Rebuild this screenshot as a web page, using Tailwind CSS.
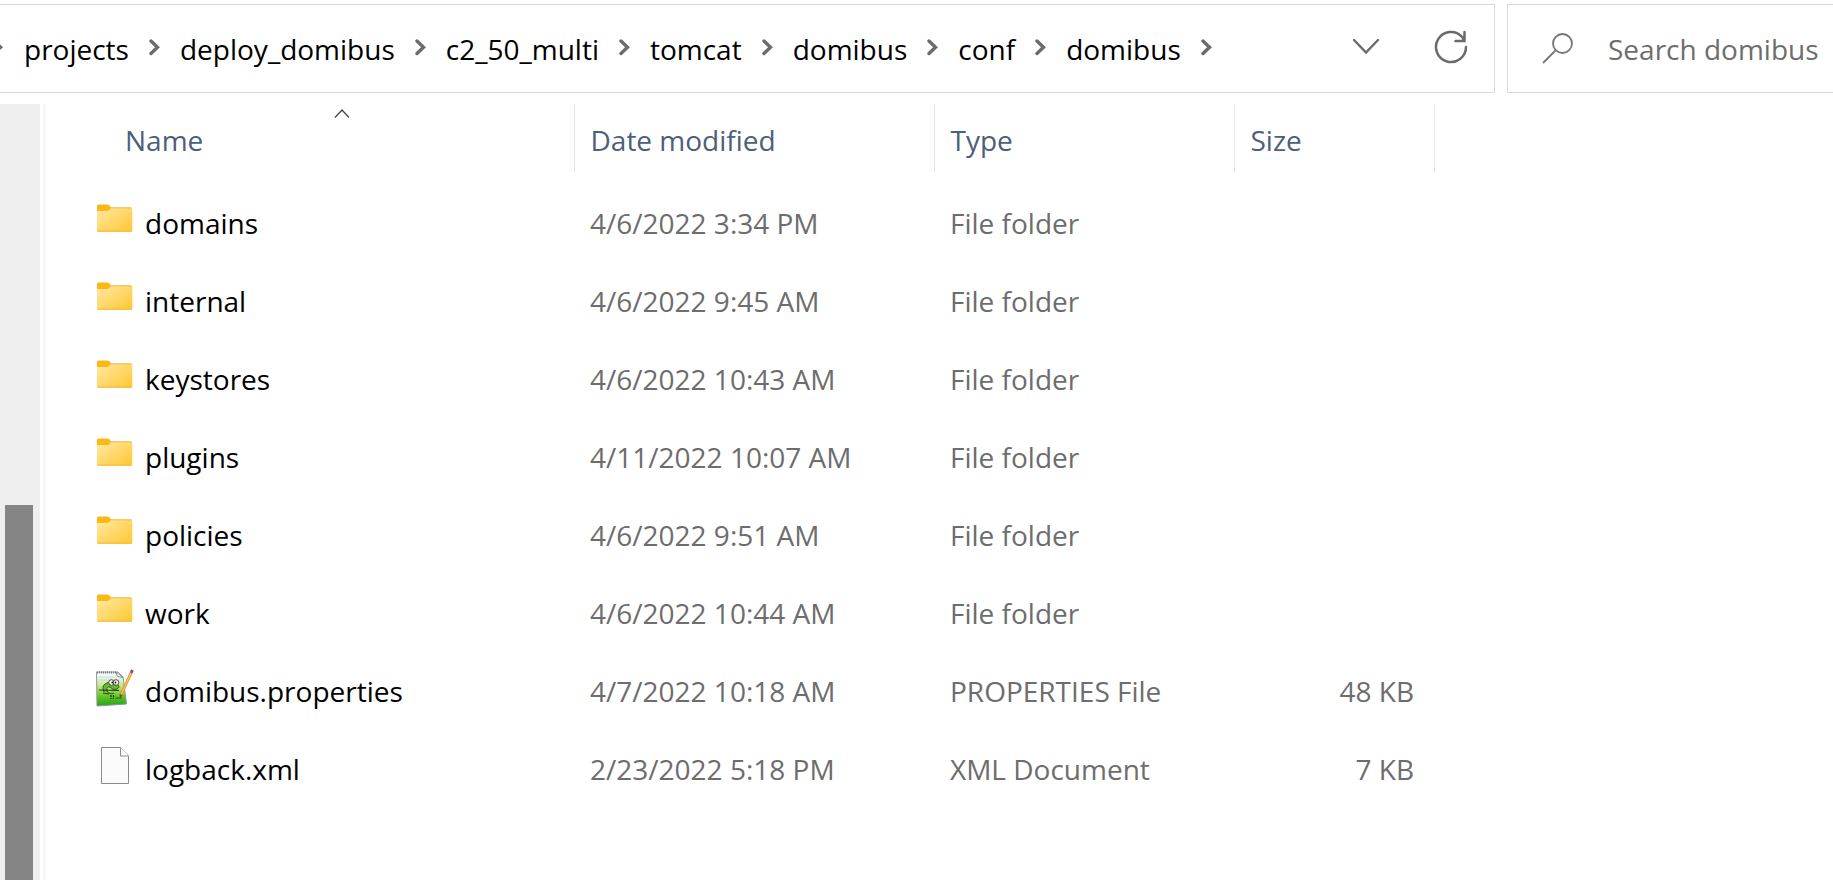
<!DOCTYPE html>
<html lang="en">
<head>
<meta charset="utf-8">
<title>domibus</title>
<script src="https://cdn.jsdelivr.net/npm/@tailwindcss/browser@4"></script>
</head>
<body class="bg-white font-['Open_Sans',sans-serif] text-[28px] leading-9 text-black">
<svg class="absolute size-0" aria-hidden="true">
  <defs>
    <linearGradient id="folderFace" x1="0" y1="0" x2="1" y2="1">
      <stop offset="0" stop-color="#ffe9a3"/><stop offset="1" stop-color="#ffc731"/>
    </linearGradient>
    <linearGradient id="noteFace" x1="0" y1="0" x2="0" y2="1">
      <stop offset="0.1" stop-color="#f4f8fb"/><stop offset="0.4" stop-color="#c5e88a"/><stop offset="0.7" stop-color="#6cc524"/><stop offset="1" stop-color="#1fa51c"/>
    </linearGradient>
  </defs>
  <symbol id="chevron" viewBox="0 0 12 18"><path d="M2 3 8.500 9.200 2 15.500" fill="none" stroke="#6b6b6b" stroke-width="3.400" stroke-linecap="round"/></symbol>
  <symbol id="folder" viewBox="0 0 40 40">
    <path d="M2 13V7Q2 5.500 3.500 5.500H12Q13.500 5.500 14.500 6.500L16.500 9 14 12Z" fill="#fcb814"/>
    <path d="M2 12H12Q13.500 12 14.500 11L16 9H36Q37.300 9 37.300 10.200V31.500Q37.300 32.500 36.300 32.500H3Q2 32.500 2 31.500Z" fill="url(#folderFace)"/>
    <path d="M16 8.800H36.500M2.500 32.200H36.800" stroke="#edb52f" stroke-width="1" fill="none"/>
  </symbol>
</svg>
<div class="flex min-h-screen flex-col pt-1">
  <header class="flex h-[89px] gap-3">
    <nav aria-label="Address" class="flex min-w-0 flex-1 items-center border border-l-0 border-[#d9d9d9] pr-6">
      <ol class="flex flex-1 items-center whitespace-nowrap">
        <li class="-ml-2 flex items-center"><svg class="mr-5 mb-1 h-[18px] w-3"><use href="#chevron"/></svg><a href="#">projects</a></li>
        <li class="flex items-center"><svg class="mr-[19px] ml-5 mb-1 h-[18px] w-3"><use href="#chevron"/></svg><a href="#">deploy_domibus</a></li>
        <li class="flex items-center"><svg class="mr-[19px] ml-5 mb-1 h-[18px] w-3"><use href="#chevron"/></svg><a href="#">c2_50_multi</a></li>
        <li class="flex items-center"><svg class="mr-[19px] ml-5 mb-1 h-[18px] w-3"><use href="#chevron"/></svg><a href="#">tomcat</a></li>
        <li class="flex items-center"><svg class="mr-[19px] ml-5 mb-1 h-[18px] w-3"><use href="#chevron"/></svg><a href="#">domibus</a></li>
        <li class="flex items-center"><svg class="mr-[19px] ml-5 mb-1 h-[18px] w-3"><use href="#chevron"/></svg><a href="#">conf</a></li>
        <li class="flex items-center"><svg class="mr-[19px] ml-5 mb-1 h-[18px] w-3"><use href="#chevron"/></svg><a href="#">domibus</a><svg class="mx-5 mb-1 h-[18px] w-3"><use href="#chevron"/></svg></li>
      </ol>
      <div class="mb-1 flex gap-[54px]">
        <button aria-label="Recent locations"><svg class="h-9 w-7" viewBox="0 0 28 36" fill="none" stroke="#6b6b6b" stroke-width="2.400" stroke-linecap="round"><path d="M2 11 14 23.500 26 11"/></svg></button>
        <button aria-label="Refresh"><svg class="h-9 w-9" viewBox="0 0 36 36" fill="none" stroke="#6b6b6b" stroke-width="2.500" stroke-linecap="round"><path d="M32 18A15 15 0 1 1 28 7.800L30.500 11.500M30.500 3V12H21.500"/></svg></button>
      </div>
    </nav>
    <label class="flex w-[326px] items-center border border-r-0 border-[#d9d9d9] pl-[34px]">
      <svg class="h-8 w-8 shrink-0" viewBox="0 0 32 32" fill="none" stroke="#767676" stroke-width="1.800"><circle cx="20.500" cy="10.500" r="9.500"/><path d="M13.500 17.500 1 30"/></svg>
      <input type="text" aria-label="Search domibus" placeholder="Search domibus" class="ml-[34px] min-w-0 flex-1 outline-none placeholder:text-[#6d6d6d]">
    </label>
  </header>
  <div class="mt-[11px] flex flex-1">
    <div class="flex w-10 shrink-0 flex-col bg-[#efefef] pt-[401px] pl-[5px]"><div class="w-7 flex-1 bg-[#858585]"></div></div>
    <main class="ml-[3px] min-w-0 flex-1 border-l-[3px] border-[#f7f7f7]">
      <table class="w-[1388px] table-fixed text-left text-[#6d6d6d]">
        <colgroup><col class="w-[528px]"><col class="w-[360px]"><col class="w-[300px]"><col class="w-[200px]"></colgroup>
        <thead class="text-[#4c607a]">
          <tr class="h-[68px]">
            <th class="relative border-r border-[#e5e5e5] pt-[3px] pl-[79px] font-normal">Name
              <svg class="absolute top-1 left-[288px] h-3 w-4" viewBox="0 0 16 12" fill="none" stroke="#444" stroke-width="1.300"><path d="M1 9.500 8 2 15 9.500"/></svg></th>
            <th class="border-r border-[#e5e5e5] pt-[3px] pl-4 font-normal">Date modified</th>
            <th class="border-r border-[#e5e5e5] pt-[3px] pl-4 font-normal">Type</th>
            <th class="border-r border-[#e5e5e5] pt-[3px] pl-4 font-normal">Size</th>
          </tr>
        </thead>
        <tbody>
          <tr aria-hidden="true" class="h-3"></tr>
          <tr class="h-[78px]"><td><div class="flex items-center gap-[10px] pl-[49px] text-black"><svg class="mb-2 size-10"><use href="#folder"/></svg>domains</div></td><td class="pl-4">4/6/2022 3:34 PM</td><td class="pl-4">File folder</td><td></td></tr>
          <tr class="h-[78px]"><td><div class="flex items-center gap-[10px] pl-[49px] text-black"><svg class="mb-2 size-10"><use href="#folder"/></svg>internal</div></td><td class="pl-4">4/6/2022 9:45 AM</td><td class="pl-4">File folder</td><td></td></tr>
          <tr class="h-[78px]"><td><div class="flex items-center gap-[10px] pl-[49px] text-black"><svg class="mb-2 size-10"><use href="#folder"/></svg>keystores</div></td><td class="pl-4">4/6/2022 10:43 AM</td><td class="pl-4">File folder</td><td></td></tr>
          <tr class="h-[78px]"><td><div class="flex items-center gap-[10px] pl-[49px] text-black"><svg class="mb-2 size-10"><use href="#folder"/></svg>plugins</div></td><td class="pl-4">4/11/2022 10:07 AM</td><td class="pl-4">File folder</td><td></td></tr>
          <tr class="h-[78px]"><td><div class="flex items-center gap-[10px] pl-[49px] text-black"><svg class="mb-2 size-10"><use href="#folder"/></svg>policies</div></td><td class="pl-4">4/6/2022 9:51 AM</td><td class="pl-4">File folder</td><td></td></tr>
          <tr class="h-[78px]"><td><div class="flex items-center gap-[10px] pl-[49px] text-black"><svg class="mb-2 size-10"><use href="#folder"/></svg>work</div></td><td class="pl-4">4/6/2022 10:44 AM</td><td class="pl-4">File folder</td><td></td></tr>
          <tr class="h-[78px]"><td><div class="flex items-center gap-[10px] pl-[49px] text-black">
            <svg class="mb-2 size-10" viewBox="0 0 40 40">
              <path d="M1.500 5H23L28 10 31.500 37 2 39Z" fill="url(#noteFace)" stroke="#8f979c"/>
              <path d="M21 5 22.500 9.500 28 10.500Z" fill="#fff" stroke="#777" stroke-width="0.800"/>
              <path d="M2 5.500H21" stroke="#777" stroke-width="2" stroke-dasharray="1 1"/>
              <path d="M3 10H20M3 13H14" stroke="#bcd8ec" stroke-width="0.800"/>
              <path d="M9 25Q6 18 12 16 16 13 22 17 26 20 22 22 18 24 15 20 11 19 12 24 14 28 19 26" fill="#69bb2b" stroke="#2c5a18" stroke-width="1"/>
              <circle cx="16.500" cy="15.500" r="2.800" fill="#fff" stroke="#333" stroke-width="0.900"/><circle cx="21" cy="15.500" r="2.800" fill="#fff" stroke="#333" stroke-width="0.900"/>
              <circle cx="17.300" cy="15.500" r="0.900"/><circle cx="20.500" cy="15.500" r="0.900"/>
              <path d="M4 23 24 23.500M8 26 14 27" stroke="#222" stroke-width="0.900"/>
              <path d="M16 28V32M18.500 28V32M21 31H27" stroke="#173c12" stroke-width="1.200" stroke-dasharray="2 0.700"/>
              <path d="M26 28 36 6" stroke="#d9962a" stroke-width="3"/><path d="M26.500 27 36 6" stroke="#f8c953" stroke-width="1.200"/>
              <path d="M36 6 37.500 3" stroke="#a5465a" stroke-width="3"/><path d="M24.500 27 27.500 28.500 25 31Z" fill="#6b4a2b"/>
            </svg>domibus.properties</div></td><td class="pl-4">4/7/2022 10:18 AM</td><td class="pl-4">PROPERTIES File</td><td class="pr-5 text-right">48 KB</td></tr>
          <tr class="h-[78px]"><td><div class="flex items-center gap-[10px] pl-[49px] text-black">
            <svg class="mb-2 size-10" viewBox="0 0 40 40" fill="#fafafa" stroke="#8b8b8b"><path d="M6.500 2.500H25.500L33.500 11V38.500H6.500Z"/><path d="M25.500 2.500V11H33.500" fill="#fff"/></svg>logback.xml</div></td><td class="pl-4">2/23/2022 5:18 PM</td><td class="pl-4">XML Document</td><td class="pr-5 text-right">7 KB</td></tr>
        </tbody>
      </table>
    </main>
  </div>
</div>
</body>
</html>
